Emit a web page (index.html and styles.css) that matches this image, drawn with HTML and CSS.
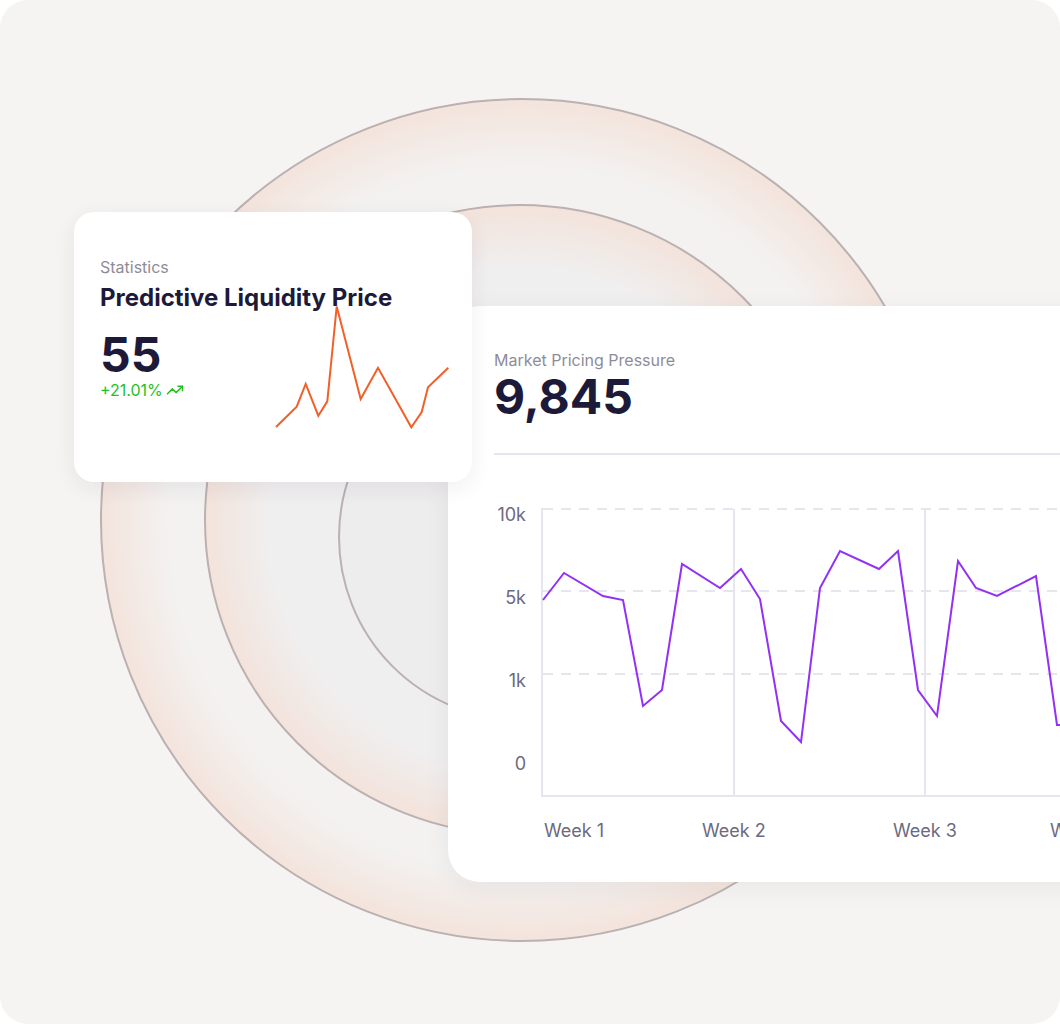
FILE: index.html
```html
<!DOCTYPE html>
<html lang="en">
<head>
<meta charset="utf-8">
<title>Statistics</title>
<link rel="stylesheet" href="styles.css">
</head>
<body>
<div class="frame">
  <div class="ring ring-outer"></div>
  <div class="ring ring-middle"></div>
  <div class="ring ring-inner"></div>

  <section class="card card-stats">
    <p class="eyebrow">Statistics</p>
    <h2 class="title">Predictive Liquidity Price</h2>
    <div class="big-value">55</div>
    <div class="delta">
      <span>+21.01%</span>
      <svg class="trend-icon" viewBox="0 0 24 24" width="18" height="18" fill="none" stroke="currentColor" stroke-width="2" stroke-linecap="round" stroke-linejoin="round"><polyline points="22 7 13.5 15.5 8.5 10.5 2 17"/><polyline points="16 7 22 7 22 13"/></svg>
    </div>
    <svg class="sparkline" viewBox="0 0 178 126" width="178" height="126" fill="none">
      <polyline points="2,123 22.7,102.7 31.7,80 44.3,111.7 53.3,97.3 62.7,2.5 86.7,95 104,63.7 137.3,123.3 147.7,108 154,83.3 174.3,63.7" stroke="#f2602a" stroke-width="2" stroke-linejoin="miter"/>
    </svg>
  </section>

  <section class="card card-market">
    <p class="eyebrow">Market Pricing Pressure</p>
    <div class="big-value">9,845</div>
    <hr class="divider">
    <div class="chart">
      <div class="y-labels">
        <span>10k</span>
        <span>5k</span>
        <span>1k</span>
        <span>0</span>
      </div>
      <div class="plot">
        <svg viewBox="0 0 580 290" width="580" height="290" fill="none">
          <g stroke="#e7e5ee" stroke-width="2">
            <line x1="2" y1="1" x2="580" y2="1" stroke-dasharray="10 8"/>
            <line x1="2" y1="83" x2="580" y2="83" stroke-dasharray="10 8"/>
            <line x1="2" y1="166" x2="580" y2="166" stroke-dasharray="10 8"/>
            <line x1="193" y1="1" x2="193" y2="288"/>
            <line x1="384" y1="1" x2="384" y2="288"/>
            <line x1="1" y1="0" x2="1" y2="289"/>
            <line x1="0" y1="288" x2="580" y2="288"/>
          </g>
          <polyline points="2,92 23,65 62,88 82,92 102,198 121,182 141,56 179,80 200,61 219,91 240,213 260,234 279,80 299,43 338,61 357,43 377,182 396,208 417,53 435,80 456,88 495,68 516,217 580,217" stroke="#9231f5" stroke-width="2" stroke-linejoin="miter"/>
        </svg>
      </div>
      <div class="x-labels">
        <span>Week 1</span>
        <span>Week 2</span>
        <span>Week 3</span>
        <span>Week 4</span>
      </div>
    </div>
  </section>
</div>
</body>
</html>
```

FILE: styles.css
```css
* { box-sizing: border-box; }

html, body {
  margin: 0;
  padding: 0;
  background: #ffffff;
}

body {
  font-family: Inter, "Noto Sans", "Liberation Sans", sans-serif;
  color: #1d1a39;
}

.frame {
  position: relative;
  width: 1060px;
  height: 1024px;
  background: #f5f4f2;
  border-radius: 28px;
  overflow: hidden;
}

.ring {
  position: absolute;
  border-radius: 50%;
  border: 2px solid #bbb0b2;
}

.ring-outer {
  left: 100px;
  top: 98px;
  width: 844px;
  height: 844px;
  background: radial-gradient(circle closest-side, #f3f2f1 84%, #f3eae5 93%, #f3e4dc 100%);
}

.ring-middle {
  left: 204px;
  top: 204px;
  width: 632px;
  height: 632px;
  background: radial-gradient(circle closest-side, #f0efef 80%, #f1e9e5 90%, #f3e3db 100%);
}

.ring-inner {
  left: 338px;
  top: 353px;
  width: 368px;
  height: 368px;
  background: #eeeded;
}

.card {
  position: absolute;
  background: #ffffff;
}

.card-stats {
  left: 74px;
  top: 212px;
  width: 398px;
  height: 270px;
  border-radius: 20px;
  padding: 45px 26px 0;
  box-shadow: 0 6px 22px rgba(40, 30, 70, 0.07);
  z-index: 2;
}

.card-market {
  left: 448px;
  top: 306px;
  width: 700px;
  height: 576px;
  border-radius: 32px;
  padding: 44px 46px 0;
  box-shadow: 0 6px 26px rgba(40, 30, 70, 0.06);
  z-index: 1;
}

.eyebrow {
  margin: 0;
  font-size: 16px;
  line-height: 20px;
  color: #8f8c99;
  font-weight: 400;
}

.title {
  margin: 6px 0 0;
  font-size: 24px;
  line-height: 30px;
  font-weight: 700;
  color: #1d1a39;
}

.big-value {
  font-size: 48px;
  line-height: 44px;
  font-weight: 700;
  color: #1d1a39;
}

.card-stats .big-value {
  margin-top: 20px;
}

.card-market .big-value {
  margin-top: 5px;
}

.delta {
  display: flex;
  align-items: center;
  gap: 3px;
  margin-top: 3px;
  font-size: 16px;
  line-height: 20px;
  color: #22c21f;
}

.trend-icon {
  display: block;
}

.sparkline {
  position: absolute;
  left: 200px;
  top: 92px;
  overflow: visible;
}

.divider {
  margin: 34px 0 0;
  border: 0;
  height: 2px;
  background: #e6e4ec;
}

.chart {
  margin-top: 50px;
  display: grid;
  grid-template-columns: 47px 1fr;
  grid-template-rows: auto auto;
}

.y-labels {
  display: flex;
  flex-direction: column;
  align-items: flex-end;
  padding-right: 15px;
}

.y-labels span,
.x-labels span {
  font-size: 18px;
  line-height: 20px;
  color: #6c6980;
}

.y-labels span {
  height: 83px;
}

.y-labels span:last-child {
  height: 20px;
}

.plot {
  padding-top: 3px;
}

.plot svg {
  display: block;
}

.x-labels {
  grid-column: 2;
  display: grid;
  grid-template-columns: 158px 191px 157px 1fr;
  padding-left: 3px;
  margin-top: 23px;
  white-space: nowrap;
}
```
